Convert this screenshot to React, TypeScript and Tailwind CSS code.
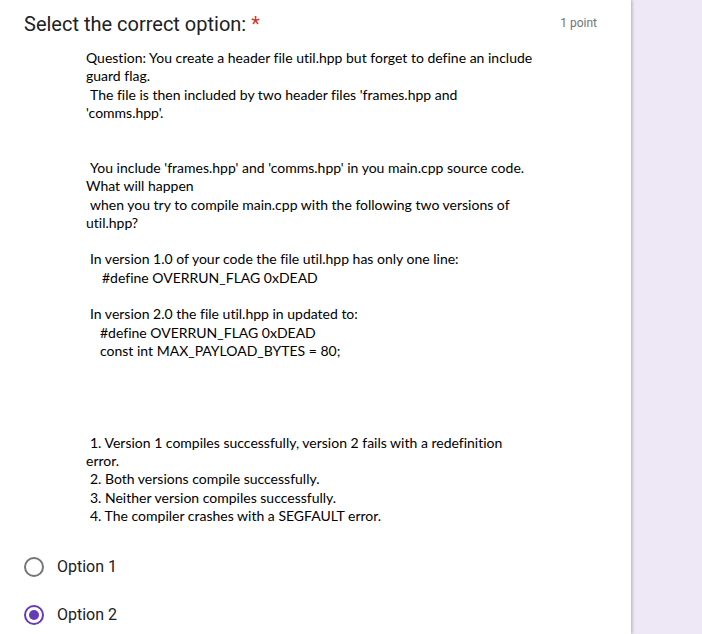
import React from "react";

const lines: { t: string; pl?: number }[] = [
  { t: "Question: You create a header file util.hpp but forget to define an include" },
  { t: "guard flag." },
  { t: "The file is then included by two header files 'frames.hpp and", pl: 4 },
  { t: "'comms.hpp'." },
  { t: "" },
  { t: "" },
  { t: "You include 'frames.hpp' and 'comms.hpp' in you main.cpp source code.", pl: 4 },
  { t: "What will happen" },
  { t: "when you try to compile main.cpp with the following two versions of", pl: 4 },
  { t: "util.hpp?" },
  { t: "" },
  { t: "In version 1.0 of your code the file util.hpp has only one line:", pl: 4 },
  { t: "#define OVERRUN_FLAG 0xDEAD", pl: 16 },
  { t: "" },
  { t: "In version 2.0 the file util.hpp in updated to:", pl: 4 },
  { t: "#define OVERRUN_FLAG 0xDEAD", pl: 14 },
  { t: "const int MAX_PAYLOAD_BYTES = 80;", pl: 14 },
  { t: "" },
  { t: "" },
  { t: "" },
  { t: "" },
  { t: "1. Version 1 compiles successfully, version 2 fails with a redefinition", pl: 4 },
  { t: "error." },
  { t: "2. Both versions compile successfully.", pl: 4 },
  { t: "3. Neither version compiles successfully.", pl: 4 },
  { t: "4. The compiler crashes with a SEGFAULT error.", pl: 4 },
];

function Radio({ checked }: { checked?: boolean }) {
  return (
    <svg width="22" height="22" viewBox="0 0 22 22">
      <circle cx="11" cy="11" r="9" fill="none" stroke={checked ? "#673ab7" : "#757575"} strokeWidth="2" />
      {checked && <circle cx="11" cy="11" r="5" fill="#673ab7" />}
    </svg>
  );
}

export default function App() {
  return (
    <div className="flex w-[702px] h-[634px] overflow-hidden bg-[#ede7f6]">
      <div className="w-[631px] shrink-0 bg-white shadow-[1px_0_3px_rgba(60,64,67,0.35)] relative">
        <div className="flex justify-between items-start pl-[24px] pr-[34px] pt-[12px]" style={{ fontFamily: "Roboto, sans-serif" }}>
          <div className="text-[20px] leading-[24px] text-[#202124]">
            Select the correct option: <span className="text-[#d93025]">*</span>
          </div>
          <div className="text-[12px] leading-[18px] text-[#70757a] pt-[2px]">1 point</div>
        </div>
        <div className="pl-[86px] pt-[13px] text-[14px] text-black [font-variant-ligatures:none]" style={{ fontFamily: "Lato, sans-serif" }}>
          {lines.map((l, i) => (
            <div key={i} className="h-[18.32px] leading-[18.32px] whitespace-pre" style={l.pl ? { paddingLeft: l.pl } : undefined}>
              {l.t}
            </div>
          ))}
        </div>
        <div className="pl-[23px] pt-[31px] flex flex-col gap-[26px]" style={{ fontFamily: "Roboto, sans-serif" }}>
          <div className="flex items-center gap-[12px] h-[22px]">
            <Radio />
            <span className="text-[16px] text-[#202124]">Option 1</span>
          </div>
          <div className="flex items-center gap-[12px] h-[22px]">
            <Radio checked />
            <span className="text-[16px] text-[#202124]">Option 2</span>
          </div>
        </div>
      </div>
      <div className="flex-1" />
    </div>
  );
}
